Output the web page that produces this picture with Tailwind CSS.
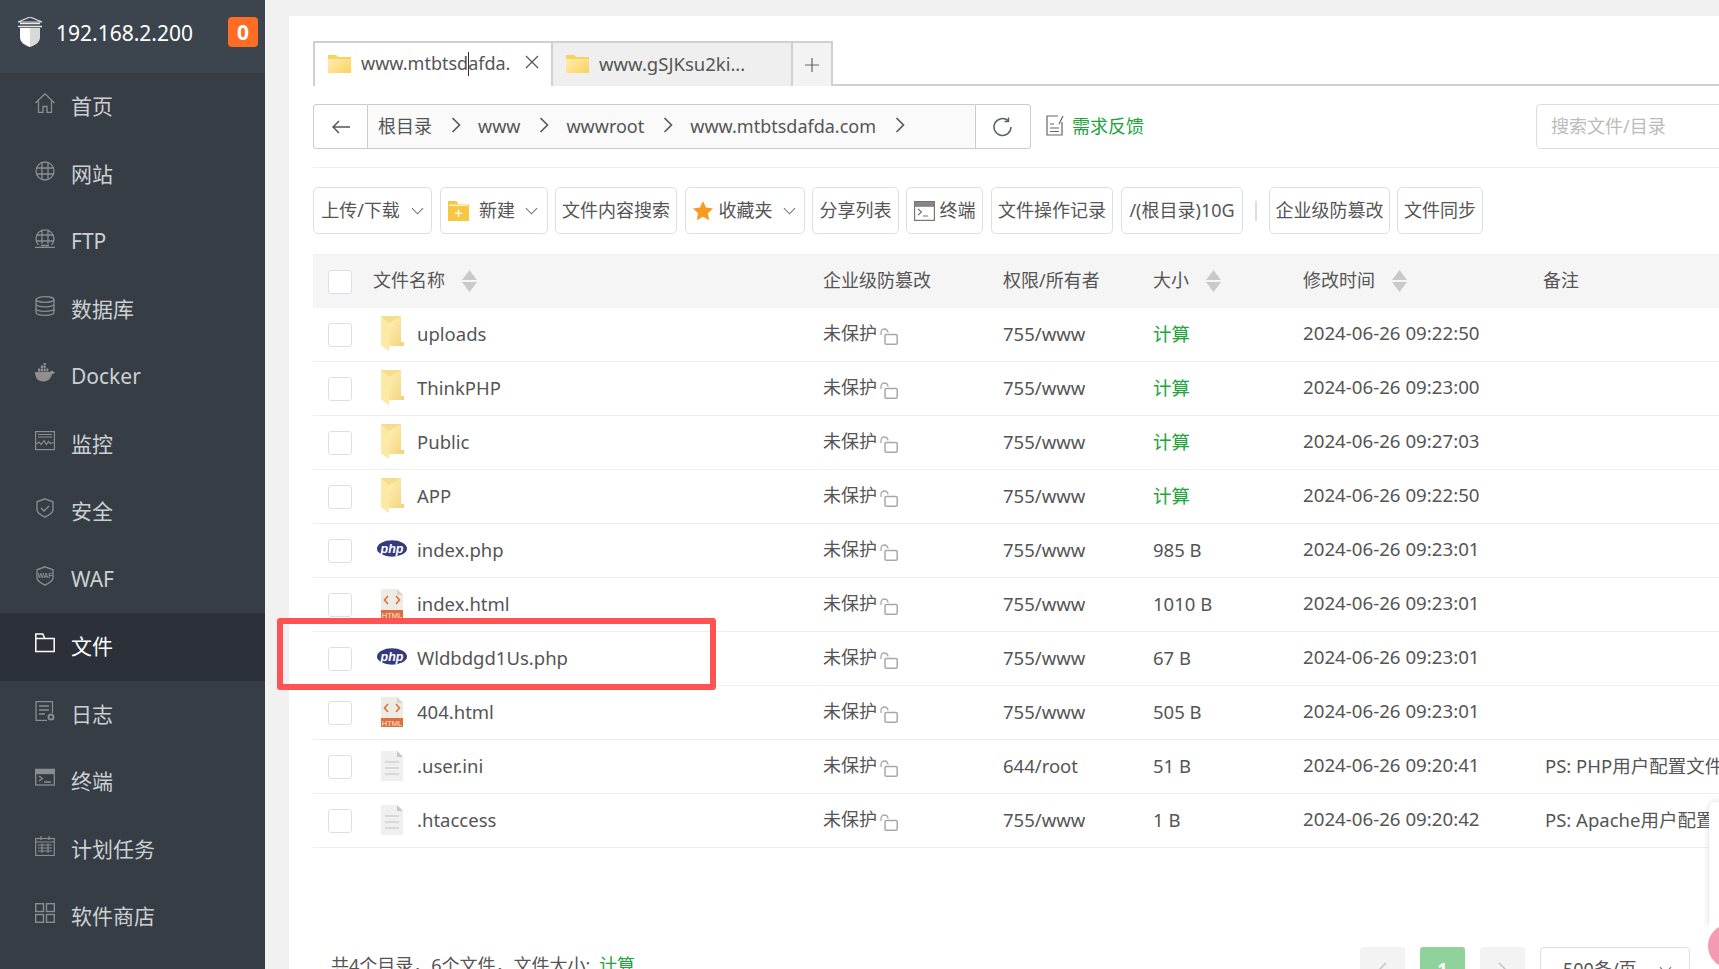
<!DOCTYPE html>
<html lang="zh-CN">
<head>
  <meta charset="UTF-8" />
  <title>192.168.2.200 - 文件</title>
  <script src="https://cdn.jsdelivr.net/npm/@tailwindcss/browser@4"></script>
</head>
<body class="relative h-screen overflow-hidden bg-[#f1f1f1] font-['Noto_Sans','Noto_Sans_CJK_SC',sans-serif] text-[18.5px] text-[#555]">
  <!-- shared icons -->
  <svg class="absolute w-0 h-0" xmlns="http://www.w3.org/2000/svg">
    <defs>
      <linearGradient id="fold" x1="0" y1="0" x2="1" y2="1"><stop offset="0" stop-color="#fff0b8"/><stop offset="1" stop-color="#f2d27a"/></linearGradient>
      <linearGradient id="tabfold" x1="0" y1="0" x2="1" y2="1"><stop offset="0" stop-color="#fff0bb"/><stop offset="1" stop-color="#fcd25f"/></linearGradient>
    </defs>
    <symbol id="folder" viewBox="0 0 24 35">
      <path d="M1 0h20v26h3v4H9v5l-8-6z" fill="#f5dc8e"/>
      <path d="M1 0l8 7v28l-8-6z" fill="#fde9a6"/>
      <path d="M9 7l12-7v26h3v4H9z" fill="url(#fold)"/>
    </symbol>
    <symbol id="php" viewBox="0 0 30 17">
      <ellipse cx="15" cy="8.500" rx="15" ry="8.300" fill="#353a7f"/>
      <text x="15" y="12.500" text-anchor="middle" font-family="Liberation Sans" font-style="italic" font-weight="700" font-size="12.500" fill="#fff">php</text>
    </symbol>
    <symbol id="html" viewBox="0 0 24 30">
      <path d="M1 0h16l6 6v24H1z" fill="#eeebe4"/>
      <path d="M17 0l6 6h-6z" fill="#d8d4cb"/>
      <path d="M8 7l-3.500 4L8 15M16 7l3.500 4L16 15" fill="none" stroke="#dc6c3a" stroke-width="1.500"/>
      <rect x="1" y="21" width="22" height="9" fill="#dd6f3f"/>
      <text x="12" y="28.500" text-anchor="middle" font-family="Liberation Sans" font-size="7.500" fill="#fbe9df">HTML</text>
    </symbol>
    <symbol id="doc" viewBox="0 0 24 30">
      <path d="M1 0h16l6 6v24H1z" fill="#efefef"/>
      <path d="M17 0l6 6h-6z" fill="#c6c6c6"/>
      <path d="M5 11h14M5 17h14M5 23h14" stroke="#d2d2d2" stroke-width="1.500"/>
    </symbol>
    <symbol id="lock" viewBox="0 0 18 17">
      <path d="M1 7V4.500a3.500 3.500 0 0 1 7 0" fill="none" stroke="#a8a8a8" stroke-width="1.300"/>
      <rect x="5" y="6.500" width="12.200" height="9.700" rx="1.200" fill="none" stroke="#a8a8a8" stroke-width="1.500"/>
    </symbol>
    <symbol id="sort" viewBox="0 0 15 22">
      <path d="M7.500 0L15 10H0zM0 12h15L7.500 22z" fill="#c9c9c9"/>
    </symbol>
    <symbol id="chev" viewBox="0 0 14 8">
      <path d="M1 1l6 6 6-6" fill="none" stroke="#777" stroke-width="1.200"/>
    </symbol>
    <symbol id="crumb" viewBox="0 0 10 16">
      <path d="M1.500 1l7 7-7 7" fill="none" stroke="#555" stroke-width="1.600"/>
    </symbol>
  </svg>

  <div class="flex h-screen">
    <!-- sidebar -->
    <aside class="w-[265px] shrink-0 bg-[#363d44] text-[#ccd0d4] text-[21px]">
      <div class="h-[73px] bg-[#3c444e] flex items-start pt-[17px] pl-[17px]">
        <svg class="w-[26px] h-[30px] shrink-0" viewBox="0 0 26 30">
          <path d="M13 0l12 5H1z" fill="none" stroke="#ddd" stroke-width="1.200"/>
          <path d="M3 6.500h20M1 9.500h24" stroke="#e8e8e8" stroke-width="1.500"/>
          <path d="M3 11h10v19C7 28 3 25 3 20z" fill="#fff"/>
          <path d="M13 11h10v9c0 5-4 8-10 10z" fill="#d9d9d9"/>
        </svg>
        <span class="ml-[13px] text-white leading-[30px] mt-[1px]">192.168.2.200</span>
        <span class="ml-auto mr-[7px] w-[30px] h-[30px] rounded bg-[#ff6d24] text-white font-bold text-center leading-[30px]">0</span>
      </div>

      <nav>
        <a class="flex items-center h-[67.500px] pl-[35px]">
          <svg class="w-5 h-5 -mt-[7px] shrink-0" viewBox="0 0 20 20" fill="none" stroke="#8b8e91" stroke-width="1.300"><path d="M0.500 10L10 0.800 19.500 10M3.500 8v11.500h4.500v-6h4v6h4.500V8"/></svg>
          <span class="ml-4">首页</span>
        </a>
        <a class="flex items-center h-[67.500px] pl-[35px]">
          <svg class="w-5 h-5 -mt-[7px] shrink-0" viewBox="0 0 20 20" fill="none" stroke="#8b8e91" stroke-width="1.300"><circle cx="10" cy="10" r="9"/><path d="M1 7h18M1 13h18M7 1.500v17M13 1.500v17"/></svg>
          <span class="ml-4">网站</span>
        </a>
        <a class="flex items-center h-[67.500px] pl-[35px]">
          <svg class="w-5 h-5 -mt-[7px] shrink-0" viewBox="0 0 20 20" fill="none" stroke="#8b8e91" stroke-width="1.300"><path d="M3.500 17A9 9 0 1 1 16.500 17M1.500 7h17M1.500 13h17M7 1.500V16M13 1.500V16M0 19.300h20M6 17.500h8"/></svg>
          <span class="ml-4">FTP</span>
        </a>
        <a class="flex items-center h-[67.500px] pl-[35px]">
          <svg class="w-5 h-5 -mt-[7px] shrink-0" viewBox="0 0 20 20" fill="none" stroke="#8b8e91" stroke-width="1.300"><ellipse cx="10" cy="3.500" rx="9" ry="2.800"/><path d="M1 3.500v13c0 1.600 4 2.800 9 2.800s9-1.200 9-2.800v-13M1 8c0 1.600 4 2.800 9 2.800s9-1.200 9-2.800M1 12.500c0 1.600 4 2.800 9 2.800s9-1.200 9-2.800"/></svg>
          <span class="ml-4">数据库</span>
        </a>
        <a class="flex items-center h-[67.500px] pl-[35px]">
          <svg class="w-5 h-5 -mt-[7px] shrink-0" viewBox="0 0 20 20" fill="#8f8f8f"><path d="M0 9h15c.5-1 1.500-1.500 2.500-1 .5 0 1 .5 1.200 1h1.300c-.5 1.500-1.500 2-3 2-1 5-4.500 7.500-9 7.500C3 18.500 0 15 0 9z"/><path d="M3 5.500h2.200v3H3zM5.800 5.500H8v3H5.800zM8.600 5.500h2.200v3H8.600zM11.400 5.500h2v3h-2zM5.800 2.500H8v2.500H5.800zM8.600 2.500h2.200v2.500H8.600zM8.600 0h2.200v2H8.600z"/></svg>
          <span class="ml-4">Docker</span>
        </a>
        <a class="flex items-center h-[67.500px] pl-[35px]">
          <svg class="w-5 h-5 -mt-[7px] shrink-0" viewBox="0 0 20 20" fill="none" stroke="#8b8e91" stroke-width="1.200"><rect x="0.600" y="0.600" width="18.800" height="18" /><path d="M3 3.500h14M3 6h14M1 13l3-2 2 2.500 3-4 2.500 4 2-3 2 2 3-1"/></svg>
          <span class="ml-4">监控</span>
        </a>
        <a class="flex items-center h-[67.500px] pl-[35px]">
          <svg class="w-5 h-5 -mt-[7px] shrink-0" viewBox="0 0 20 20" fill="none" stroke="#8b8e91" stroke-width="1.300"><path d="M10 .8l8 3v8c0 3-4 5.500-8 7.400-4-1.900-8-4.400-8-7.400v-8z"/><path d="M6 10l3 3 5-5"/></svg>
          <span class="ml-4">安全</span>
        </a>
        <a class="flex items-center h-[67.500px] pl-[35px]">
          <svg class="w-5 h-5 -mt-[7px] shrink-0" viewBox="0 0 20 20"><path d="M10 .8l8 3v8c0 3-4 5.500-8 7.400-4-1.900-8-4.400-8-7.400v-8z" fill="none" stroke="#8b8e91" stroke-width="1.300"/><text x="10" y="12" text-anchor="middle" font-family="Liberation Sans" font-weight="700" font-size="6.500" fill="#8b8e91">WAF</text></svg>
          <span class="ml-4">WAF</span>
        </a>
        <a class="flex items-center h-[67.500px] pl-[35px] bg-[#2c3038] text-white">
          <svg class="w-5 h-5 -mt-[7px] shrink-0" viewBox="0 0 20 20" fill="none" stroke="#fff" stroke-width="1.500"><path d="M.8 18.500V1h7l2 4.500h9.400v13zM.8 5.500h9"/></svg>
          <span class="ml-4">文件</span>
        </a>
        <a class="flex items-center h-[67.500px] pl-[35px]">
          <svg class="w-5 h-5 -mt-[7px] shrink-0" viewBox="0 0 20 20" fill="none" stroke="#8b8e91" stroke-width="1.300"><path d="M12 19.500H1V.7h16.500V12M4 5h10M4 9h10M4 13h6"/><circle cx="16" cy="16" r="2.500" stroke-width="2"/></svg>
          <span class="ml-4">日志</span>
        </a>
        <a class="flex items-center h-[67.500px] pl-[35px]">
          <svg class="w-5 h-5 -mt-[7px] shrink-0" viewBox="0 0 20 20" fill="none" stroke="#8b8e91" stroke-width="1.300"><rect x=".7" y="1.500" width="18.600" height="15.500"/><rect x=".7" y="1.500" width="18.600" height="4" fill="#8b8e91"/><path d="M4 8l3.500 2.500L4 13M9 14h7"/></svg>
          <span class="ml-4">终端</span>
        </a>
        <a class="flex items-center h-[67.500px] pl-[35px]">
          <svg class="w-5 h-5 -mt-[7px] shrink-0" viewBox="0 0 20 20" fill="none" stroke="#8b8e91" stroke-width="1.200"><rect x=".7" y="2.500" width="18.600" height="17"/><path d="M6 0v4M14 0v4M.7 6h18.600M3 9h14M3 12h14M3 15h14M7 7.500V17M13 7.500V17"/></svg>
          <span class="ml-4">计划任务</span>
        </a>
        <a class="flex items-center h-[67.500px] pl-[35px]">
          <svg class="w-5 h-5 -mt-[7px] shrink-0" viewBox="0 0 20 20" fill="none" stroke="#8b8e91" stroke-width="1.400"><rect x=".7" y=".7" width="7.800" height="7.800"/><rect x="11.500" y=".7" width="7.800" height="7.800"/><rect x=".7" y="11.500" width="7.800" height="7.800"/><rect x="11.500" y="11.500" width="7.800" height="7.800"/></svg>
          <span class="ml-4">软件商店</span>
        </a>
      </nav>
    </aside>

    <!-- main -->
    <main class="flex-1 min-w-0 pt-4 pl-6 overflow-hidden">
      <div class="bg-white h-full pl-[24px] pt-[25px] whitespace-nowrap overflow-hidden">
        <!-- tabs -->
        <div class="flex h-[45px] border-b-2 border-[#d0d0d0]">
          <div class="relative flex items-center w-[238px] h-[45px] pb-[2px] border-l-2 border-t-2 border-[#d0d0d0] bg-white pl-[13px]">
            <svg class="w-[23px] h-[19px] shrink-0" viewBox="0 0 23 19"><path d="M0 1h8l2 2h13v16H0z" fill="url(#tabfold)"/><path d="M0 1h8l2 2h13v2H0z" fill="#fcd25f"/></svg>
            <span class="ml-[10px] text-[18px]">www.mtbtsdafda.</span>
            <svg class="w-[14px] h-[14px] ml-auto mr-[12px] -mt-1" viewBox="0 0 14 14"><path d="M1 1l12 12M13 1L1 13" stroke="#555" stroke-width="1.200"/></svg>
            <span class="absolute left-[153px] top-[9px] w-px h-6 bg-[#333]"></span>
          </div>
          <div class="flex items-center w-[240px] h-[45px] pb-[2px] border-l-2 border-t-2 border-[#d0d0d0] bg-[#efefef] pl-[13px]">
            <svg class="w-[23px] h-[19px] shrink-0" viewBox="0 0 23 19"><path d="M0 1h8l2 2h13v16H0z" fill="url(#tabfold)"/><path d="M0 1h8l2 2h13v2H0z" fill="#fcd25f"/></svg>
            <span class="ml-[10px]">www.gSJKsu2ki...</span>
          </div>
          <div class="flex items-center justify-center w-[42px] h-[45px] border-x-2 border-t-2 border-[#d0d0d0] bg-[#f3f3f3]">
            <svg class="w-[14px] h-[14px]" viewBox="0 0 14 14"><path d="M7 0v14M0 7h14" stroke="#666" stroke-width="1.200"/></svg>
          </div>
        </div>

        <!-- path bar -->
        <div class="flex items-center w-max h-[45px] mt-[18px] text-[18px]">
          <div class="flex items-center justify-center w-[55px] h-[45px] border border-[#ccc] rounded-l-[3px]">
            <svg class="w-[18px] h-[14px]" viewBox="0 0 18 14" fill="none" stroke="#555" stroke-width="1.500"><path d="M7 1L1 7l6 6M1 7h17"/></svg>
          </div>
          <div class="flex items-center w-[607px] h-[45px] border-y border-[#ccc] bg-[#fafafa]">
            <span class="ml-[10px]">根目录</span>
            <svg class="w-[10px] h-4 ml-[19px] -mt-[3px]"><use href="#crumb"/></svg>
            <span class="ml-[17px]">www</span>
            <svg class="w-[10px] h-4 ml-[19px] -mt-[3px]"><use href="#crumb"/></svg>
            <span class="ml-[17px]">wwwroot</span>
            <svg class="w-[10px] h-4 ml-[19px] -mt-[3px]"><use href="#crumb"/></svg>
            <span class="ml-[17px]">www.mtbtsdafda.com</span>
            <svg class="w-[10px] h-4 ml-[19px] -mt-[3px]"><use href="#crumb"/></svg>
          </div>
          <div class="flex items-center justify-center w-[56px] h-[45px] border border-[#ccc] rounded-r-[3px]">
            <svg class="w-5 h-5" viewBox="0 0 20 20" fill="none" stroke="#5a6068" stroke-width="1.500"><path d="M15 3.500A8.500 8.500 0 1 0 18 10M15.500 0.500v4h-4"/></svg>
          </div>
          <svg class="w-[18px] h-[21px] ml-[15px] -mt-[3px]" viewBox="0 0 18 21" fill="none" stroke="#666" stroke-width="1.200"><path d="M12 1H1v19h15V7M4 9h4M4 13h9M4 16.500h9M13 9l4-8"/></svg>
          <span class="ml-2 w-[74px] text-[#20a53a]">需求反馈</span>
          <div class="ml-[390px] w-[240px] h-[45px] border border-[#ddd] rounded-[4px] pl-[14px] leading-[43px] text-[#bbb]">搜索文件/目录</div>
        </div>

        <div class="h-px bg-[#eee] mt-[18px]"></div>

        <!-- toolbar -->
        <div class="flex items-center w-max h-[47px] mt-[19px] text-[18px]">
          <div class="flex items-center justify-center w-[119px] h-[47px] border border-[#dcdfe6] rounded-[5px]">上传/下载<svg class="w-[13px] h-[8px] ml-[11px]"><use href="#chev"/></svg></div>
          <div class="flex items-center justify-center w-[108px] h-[47px] ml-2 pr-[2px] border border-[#dcdfe6] rounded-[5px]">
            <svg class="w-[21px] h-[20px] mr-[10px]" viewBox="0 0 20 19"><path d="M0 0h8l2 3h10v16H0z" fill="#f5c742"/><path d="M1 4h18" stroke="#fff"/><path d="M10 8v7M6.500 11.500h7" stroke="#fff" stroke-width="1.300"/></svg>新建<svg class="w-[13px] h-[8px] ml-[10px]"><use href="#chev"/></svg>
          </div>
          <div class="flex items-center justify-center w-[122px] h-[47px] ml-[7px] border border-[#dcdfe6] rounded-[5px]">文件内容搜索</div>
          <div class="flex items-center justify-center w-[120px] h-[47px] ml-2 pr-[2px] border border-[#dcdfe6] rounded-[5px]">
            <svg class="w-[20px] h-[20px] mr-[6px]" viewBox="0 0 20 20"><path d="M10 0l3 6.500 7 .9-5.100 4.800 1.300 7L10 15.800l-6.200 3.400 1.300-7L0 7.400l7-.9z" fill="#fb9a1f"/></svg>收藏夹<svg class="w-[13px] h-[8px] ml-[10px]"><use href="#chev"/></svg>
          </div>
          <div class="flex items-center justify-center w-[87px] h-[47px] ml-[7px] border border-[#dcdfe6] rounded-[5px]">分享列表</div>
          <div class="flex items-center justify-center w-[77px] h-[47px] ml-[7px] border border-[#dcdfe6] rounded-[5px]">
            <svg class="w-[21px] h-[20px] mr-[5px]" viewBox="0 0 21 20" fill="none" stroke="#777" stroke-width="1.200"><rect x=".6" y=".6" width="19.800" height="18.800" fill="#fff"/><rect x=".6" y=".6" width="19.800" height="4.500" fill="#888"/><path d="M4 8l3.500 3L4 14M9 15h5"/></svg>终端
          </div>
          <div class="flex items-center justify-center w-[122px] h-[47px] ml-2 border border-[#dcdfe6] rounded-[5px]">文件操作记录</div>
          <div class="flex items-center justify-center w-[122px] h-[47px] ml-[8px] border border-[#dcdfe6] rounded-[5px]">/(根目录)10G</div>
          <div class="w-[2px] h-5 ml-[12px] bg-[#dcdfe6]"></div>
          <div class="flex items-center justify-center w-[121px] h-[47px] ml-[12px] border border-[#dcdfe6] rounded-[5px]">企业级防篡改</div>
          <div class="flex items-center justify-center w-[86px] h-[47px] ml-[7px] border border-[#dcdfe6] rounded-[5px]">文件同步</div>
        </div>

        <!-- table -->
        <div class="mt-5 border-t border-[#eee]">
          <div class="grid grid-cols-[60px_450px_180px_150px_150px_240px_1fr] items-center h-[53px] pb-[2px] bg-[#f5f5f5] text-[18px]">
            <span class="ml-[15px] mt-[2px] w-6 h-6 rounded-[3px] border border-[#dcdfe6] bg-white"></span>
            <span class="flex items-center">文件名称<svg class="w-[15px] h-[22px] ml-[17px]"><use href="#sort"/></svg></span>
            <span>企业级防篡改</span>
            <span>权限/所有者</span>
            <span class="flex items-center">大小<svg class="w-[15px] h-[22px] ml-[17px]"><use href="#sort"/></svg></span>
            <span class="flex items-center">修改时间<svg class="w-[15px] h-[22px] ml-[17px]"><use href="#sort"/></svg></span>
            <span>备注</span>
          </div>

          <div class="grid grid-cols-[60px_450px_180px_150px_150px_240px_1fr] items-center h-[54px] pb-[2px] border-b border-[#eee]">
            <span class="ml-[15px] mt-[2px] w-6 h-6 rounded-[3px] border border-[#dcdfe6]"></span>
            <span class="flex items-center"><span class="flex justify-center w-[38px] mr-[6px]"><svg class="w-6 h-[35px]"><use href="#folder"/></svg></span>uploads</span>
            <span class="flex items-center text-[18px]">未保护<svg class="w-[18px] h-[17px] ml-[3px] mt-[5px]"><use href="#lock"/></svg></span>
            <span>755/www</span>
            <span class="text-[#20a53a]">计算</span>
            <span class="text-[18.700px]">2024-06-26 09:22:50</span>
            <span class="pl-[2px]"></span>
          </div>
          <div class="grid grid-cols-[60px_450px_180px_150px_150px_240px_1fr] items-center h-[54px] pb-[2px] border-b border-[#eee]">
            <span class="ml-[15px] mt-[2px] w-6 h-6 rounded-[3px] border border-[#dcdfe6]"></span>
            <span class="flex items-center"><span class="flex justify-center w-[38px] mr-[6px]"><svg class="w-6 h-[35px]"><use href="#folder"/></svg></span>ThinkPHP</span>
            <span class="flex items-center text-[18px]">未保护<svg class="w-[18px] h-[17px] ml-[3px] mt-[5px]"><use href="#lock"/></svg></span>
            <span>755/www</span>
            <span class="text-[#20a53a]">计算</span>
            <span class="text-[18.700px]">2024-06-26 09:23:00</span>
            <span class="pl-[2px]"></span>
          </div>
          <div class="grid grid-cols-[60px_450px_180px_150px_150px_240px_1fr] items-center h-[54px] pb-[2px] border-b border-[#eee]">
            <span class="ml-[15px] mt-[2px] w-6 h-6 rounded-[3px] border border-[#dcdfe6]"></span>
            <span class="flex items-center"><span class="flex justify-center w-[38px] mr-[6px]"><svg class="w-6 h-[35px]"><use href="#folder"/></svg></span>Public</span>
            <span class="flex items-center text-[18px]">未保护<svg class="w-[18px] h-[17px] ml-[3px] mt-[5px]"><use href="#lock"/></svg></span>
            <span>755/www</span>
            <span class="text-[#20a53a]">计算</span>
            <span class="text-[18.700px]">2024-06-26 09:27:03</span>
            <span class="pl-[2px]"></span>
          </div>
          <div class="grid grid-cols-[60px_450px_180px_150px_150px_240px_1fr] items-center h-[54px] pb-[2px] border-b border-[#eee]">
            <span class="ml-[15px] mt-[2px] w-6 h-6 rounded-[3px] border border-[#dcdfe6]"></span>
            <span class="flex items-center"><span class="flex justify-center w-[38px] mr-[6px]"><svg class="w-6 h-[35px]"><use href="#folder"/></svg></span>APP</span>
            <span class="flex items-center text-[18px]">未保护<svg class="w-[18px] h-[17px] ml-[3px] mt-[5px]"><use href="#lock"/></svg></span>
            <span>755/www</span>
            <span class="text-[#20a53a]">计算</span>
            <span class="text-[18.700px]">2024-06-26 09:22:50</span>
            <span class="pl-[2px]"></span>
          </div>
          <div class="grid grid-cols-[60px_450px_180px_150px_150px_240px_1fr] items-center h-[54px] pb-[2px] border-b border-[#eee]">
            <span class="ml-[15px] mt-[2px] w-6 h-6 rounded-[3px] border border-[#dcdfe6]"></span>
            <span class="flex items-center"><span class="flex justify-center w-[38px] mr-[6px]"><svg class="w-[30px] h-[17px] -mt-[2px]"><use href="#php"/></svg></span>index.php</span>
            <span class="flex items-center text-[18px]">未保护<svg class="w-[18px] h-[17px] ml-[3px] mt-[5px]"><use href="#lock"/></svg></span>
            <span>755/www</span>
            <span>985 B</span>
            <span class="text-[18.700px]">2024-06-26 09:23:01</span>
            <span class="pl-[2px]"></span>
          </div>
          <div class="grid grid-cols-[60px_450px_180px_150px_150px_240px_1fr] items-center h-[54px] pb-[2px] border-b border-[#eee]">
            <span class="ml-[15px] mt-[2px] w-6 h-6 rounded-[3px] border border-[#dcdfe6]"></span>
            <span class="flex items-center"><span class="flex justify-center w-[38px] mr-[6px]"><svg class="w-6 h-[30px]"><use href="#html"/></svg></span>index.html</span>
            <span class="flex items-center text-[18px]">未保护<svg class="w-[18px] h-[17px] ml-[3px] mt-[5px]"><use href="#lock"/></svg></span>
            <span>755/www</span>
            <span>1010 B</span>
            <span class="text-[18.700px]">2024-06-26 09:23:01</span>
            <span class="pl-[2px]"></span>
          </div>
          <div class="grid grid-cols-[60px_450px_180px_150px_150px_240px_1fr] items-center h-[54px] pb-[2px] border-b border-[#eee]">
            <span class="ml-[15px] mt-[2px] w-6 h-6 rounded-[3px] border border-[#dcdfe6]"></span>
            <span class="flex items-center"><span class="flex justify-center w-[38px] mr-[6px]"><svg class="w-[30px] h-[17px] -mt-[2px]"><use href="#php"/></svg></span>Wldbdgd1Us.php</span>
            <span class="flex items-center text-[18px]">未保护<svg class="w-[18px] h-[17px] ml-[3px] mt-[5px]"><use href="#lock"/></svg></span>
            <span>755/www</span>
            <span>67 B</span>
            <span class="text-[18.700px]">2024-06-26 09:23:01</span>
            <span class="pl-[2px]"></span>
          </div>
          <div class="grid grid-cols-[60px_450px_180px_150px_150px_240px_1fr] items-center h-[54px] pb-[2px] border-b border-[#eee]">
            <span class="ml-[15px] mt-[2px] w-6 h-6 rounded-[3px] border border-[#dcdfe6]"></span>
            <span class="flex items-center"><span class="flex justify-center w-[38px] mr-[6px]"><svg class="w-6 h-[30px]"><use href="#html"/></svg></span>404.html</span>
            <span class="flex items-center text-[18px]">未保护<svg class="w-[18px] h-[17px] ml-[3px] mt-[5px]"><use href="#lock"/></svg></span>
            <span>755/www</span>
            <span>505 B</span>
            <span class="text-[18.700px]">2024-06-26 09:23:01</span>
            <span class="pl-[2px]"></span>
          </div>
          <div class="grid grid-cols-[60px_450px_180px_150px_150px_240px_1fr] items-center h-[54px] pb-[2px] border-b border-[#eee]">
            <span class="ml-[15px] mt-[2px] w-6 h-6 rounded-[3px] border border-[#dcdfe6]"></span>
            <span class="flex items-center"><span class="flex justify-center w-[38px] mr-[6px]"><svg class="w-6 h-[30px]"><use href="#doc"/></svg></span>.user.ini</span>
            <span class="flex items-center text-[18px]">未保护<svg class="w-[18px] h-[17px] ml-[3px] mt-[5px]"><use href="#lock"/></svg></span>
            <span>644/root</span>
            <span>51 B</span>
            <span class="text-[18.700px]">2024-06-26 09:20:41</span>
            <span class="pl-[2px]">PS: PHP用户配置文件</span>
          </div>
          <div class="grid grid-cols-[60px_450px_180px_150px_150px_240px_1fr] items-center h-[54px] pb-[2px] border-b border-[#eee]">
            <span class="ml-[15px] mt-[2px] w-6 h-6 rounded-[3px] border border-[#dcdfe6]"></span>
            <span class="flex items-center"><span class="flex justify-center w-[38px] mr-[6px]"><svg class="w-6 h-[30px]"><use href="#doc"/></svg></span>.htaccess</span>
            <span class="flex items-center text-[18px]">未保护<svg class="w-[18px] h-[17px] ml-[3px] mt-[5px]"><use href="#lock"/></svg></span>
            <span>755/www</span>
            <span>1 B</span>
            <span class="text-[18.700px]">2024-06-26 09:20:42</span>
            <span class="pl-[2px]">PS: Apache用户配置</span>
          </div>
        </div>

        <!-- footer -->
        <div class="flex items-start mt-[99px] pr-[29px] text-[18px]">
          <span class="ml-[18px] mt-[5px]">共4个目录，6个文件，文件大小: <span class="ml-1 text-[#20a53a]">计算</span></span>
          <div class="flex items-center ml-auto">
            <span class="flex items-center justify-center w-[45px] h-[45px] rounded-[3px] bg-[#f3f3f3]"><svg class="w-[9px] h-[15px]" viewBox="0 0 9 15"><path d="M8 1L1.500 7.500 8 14" fill="none" stroke="#c5c5c5" stroke-width="1.500"/></svg></span>
            <span class="flex items-center justify-center w-[45px] h-[45px] ml-[15px] rounded-[3px] bg-[#90d29c] text-white font-bold">1</span>
            <span class="flex items-center justify-center w-[45px] h-[45px] ml-[15px] rounded-[3px] bg-[#f3f3f3]"><svg class="w-[9px] h-[15px]" viewBox="0 0 9 15"><path d="M1 1l6.500 6.500L1 14" fill="none" stroke="#c5c5c5" stroke-width="1.500"/></svg></span>
            <span class="flex items-center w-[150px] h-[45px] ml-[15px] pl-[22px] rounded-[4px] border border-[#dcdfe6]">500条/页<svg class="w-[13px] h-[8px] ml-[22px]"><use href="#chev"/></svg></span>
          </div>
        </div>
      </div>
    </main>
  </div>

  <!-- highlight box -->
  <div class="absolute left-[277px] top-[618px] w-[439px] h-[72px] border-[6px] border-[#ff5252] rounded-[3px]"></div>

  <!-- support widget at the edge -->
  <div class="absolute left-[1709px] top-[802px] w-5 h-[125px] bg-white rounded-tl-md shadow-[0_0_6px_rgba(0,0,0,0.15)]"></div>
  <div class="absolute left-[1700px] top-[916px] w-[60px] h-[60px] rounded-full bg-white flex items-center justify-center">
    <span class="w-[44px] h-[44px] rounded-full bg-[#f49ab2]"></span>
  </div>
</body>
</html>
